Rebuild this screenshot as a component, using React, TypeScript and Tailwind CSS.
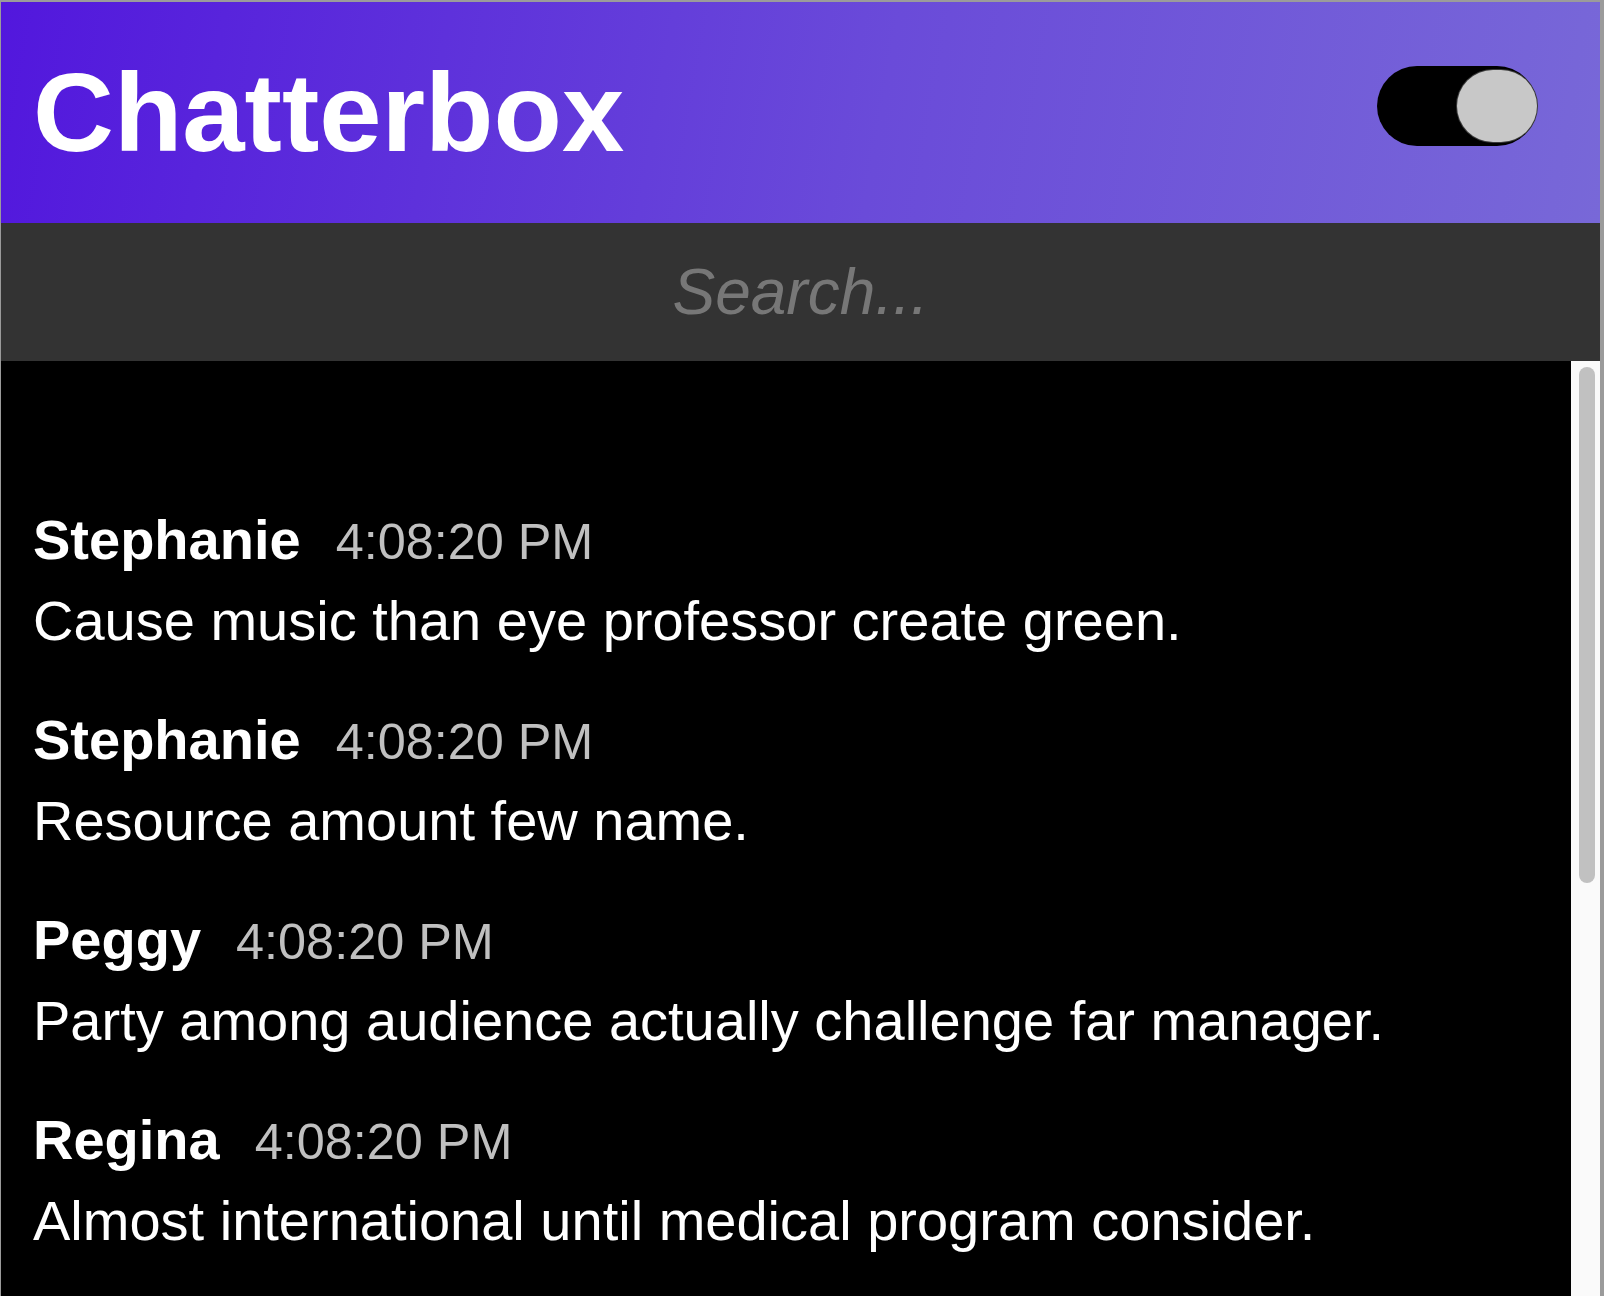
import { useState } from 'react';

type Message = {
  id: number;
  author: string;
  time: string;
  text: string;
};

const messages: Message[] = [
  { id: 1, author: 'Stephanie', time: '4:08:20 PM', text: 'Cause music than eye professor create green.' },
  { id: 2, author: 'Stephanie', time: '4:08:20 PM', text: 'Resource amount few name.' },
  { id: 3, author: 'Peggy', time: '4:08:20 PM', text: 'Party among audience actually challenge far manager.' },
  { id: 4, author: 'Regina', time: '4:08:20 PM', text: 'Almost international until medical program consider.' },
];

const Toggle = ({ on, onChange }: { on: boolean; onChange: (v: boolean) => void }) => (
  <button
    type="button"
    onClick={() => onChange(!on)}
    className={`mb-[13px] flex h-[80px] w-[160px] shrink-0 items-center rounded-full bg-black ${on ? 'justify-end' : 'justify-start'}`}
  >
    <span className="h-[72px] w-[80px] rounded-full bg-[#c8c8c8] shadow-[0_0_0_1px_#3a3a3a]" />
  </button>
);

export default function App() {
  const [dark, setDark] = useState(true);
  const [query, setQuery] = useState('');

  const shown = messages.filter((m) =>
    `${m.author} ${m.text}`.toLowerCase().includes(query.toLowerCase()),
  );

  return (
    <div className="flex h-[1296px] w-[1604px] flex-col overflow-hidden border-t-2 border-r-4 border-l border-[#9b9b9b] bg-black font-['Liberation_Sans',Arial,sans-serif]">
      <header className="flex h-[221px] shrink-0 items-center justify-between bg-[linear-gradient(100deg,#5217dd_0%,#6a4bd9_55%,#7868d8_100%)] pr-[63px] pl-[32px]">
        <h1 className="text-[112px] leading-normal font-bold text-white">Chatterbox</h1>
        <Toggle on={dark} onChange={setDark} />
      </header>

      <div className="flex h-[138px] shrink-0 items-center bg-[#333333]">
        <input
          value={query}
          onChange={(e) => setQuery(e.target.value)}
          placeholder="Search..."
          className="w-full bg-transparent text-center text-[64px] leading-normal text-white italic outline-none placeholder:text-[#777777]"
        />
      </div>

      <div className="flex min-h-0 flex-1">
        <ul className="flex flex-1 flex-col gap-[55px] px-[32px] pt-[147px]">
          {shown.map(({ id, author, time, text }) => (
            <li key={id} className="flex flex-col gap-[15px]">
              <div className="flex items-baseline leading-[64px]">
                <span className="text-[56px] font-bold text-white">{author}</span>
                <span className="ml-[35px] text-[50.4px] text-[#c0c0c0]">{time}</span>
              </div>
              <p className="text-[56px] leading-[64px] text-white">{text}</p>
            </li>
          ))}
        </ul>
        <div className="w-[29px] shrink-0 bg-[#fafafa] pt-[6px] pl-[8px]">
          <div className="h-[516px] w-[16px] rounded-full bg-[#c1c1c1]" />
        </div>
      </div>
    </div>
  );
}
